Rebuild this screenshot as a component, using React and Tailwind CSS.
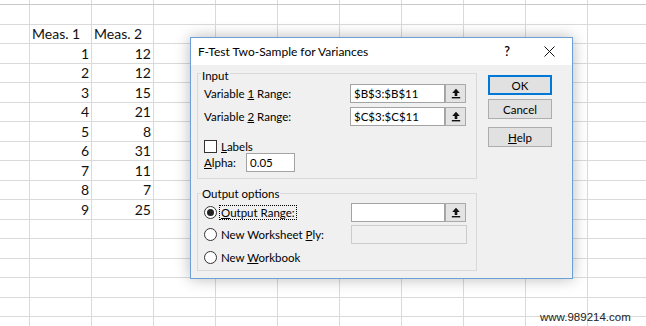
import React from 'react';

const meas = [
  [1, 12], [2, 12], [3, 15], [4, 21], [5, 8], [6, 31], [7, 11], [8, 7], [9, 25],
];

const rows = [
  ['', ''],
  ['Meas. 1', 'Meas. 2'],
  ...meas.map(([a, b]) => [a, b]),
  ['', ''], ['', ''], ['', ''], ['', ''], ['', ''], ['', ''],
];

const EXTRA_COLS = 9;

const Cell = ({ first, right, children }) => (
  <div
    className={`${first ? 'w-[30px]' : 'w-[62px]'} shrink-0 h-full border-r border-[#dadada] flex items-end pb-[1px] px-[2px] ${right ? 'justify-end' : ''}`}
  >
    {children}
  </div>
);

const UpArrow = () => (
  <svg width="10" height="11" viewBox="0 0 10 11">
    <path d="M5 0.8 L1.2 5 H3.7 V8 H6.3 V5 H8.8 Z" fill="#111" />
    <rect x="0.8" y="9" width="8.4" height="1.4" fill="#111" />
  </svg>
);

const RefButton = () => (
  <div className="w-[21px] h-full shrink-0 bg-[#e3e3e3] border border-[#a9a9a9] flex items-center justify-center">
    <UpArrow />
  </div>
);

const TextBox = ({ value, width }) => (
  <div className={`${width} h-full shrink-0 bg-white border border-[#a3a3a3] flex items-center px-[3px] text-[11.5px]`}>
    {value}
  </div>
);

const Radio = ({ checked }) => (
  <div className="w-[13px] h-[13px] shrink-0 rounded-full border border-[#333] bg-white flex items-center justify-center">
    {checked && <div className="w-[7px] h-[7px] rounded-full bg-[#222]" />}
  </div>
);

const Button = ({ children, primary }) => (
  <div
    className={`w-[64px] h-[20px] bg-[#e1e1e1] flex items-center justify-center ${primary ? 'border-2 border-[#0078d7]' : 'border border-[#adadad]'}`}
  >
    {children}
  </div>
);

export default function App() {
  return (
    <div className="relative w-[646px] h-[326px] overflow-hidden bg-white font-['Lato',sans-serif] text-[14px] leading-[16px] text-[#111]">
      {/* sheet grid */}
      <div className="flex flex-col">
        <div className="h-[5px] flex border-b border-[#c9c9c9]">
          <Cell first />
          {Array.from({ length: EXTRA_COLS + 2 }).map((_, i) => (
            <Cell key={i} />
          ))}
        </div>
        {rows.map((r, i) => {
          const isNum = typeof r[0] === 'number';
          return (
            <div key={i} className="h-[19.5px] shrink-0 flex border-b border-[#dadada]">
              <Cell first />
              <Cell right={isNum}>{r[0]}</Cell>
              <Cell right={isNum}>{r[1]}</Cell>
              {Array.from({ length: EXTRA_COLS }).map((_, j) => (
                <Cell key={j} />
              ))}
            </div>
          );
        })}
      </div>

      {/* dialog */}
      <div className="absolute left-[190px] top-[37px] w-[383px] h-[242px] border border-[#6b9fd8] bg-[#f0f0f0] shadow-[0_0_14px_rgba(0,0,0,0.28)] flex flex-col font-['Segoe_UI',Lato,sans-serif] text-[11.5px] leading-[15px] text-black">
        <div className="h-[27px] shrink-0 bg-white flex items-center pl-[7px]">
          <span className="flex-1 text-[12px]">F-Test Two-Sample for Variances</span>
          <span className="text-[12.5px] font-semibold mr-[34px]">?</span>
          <svg width="11" height="11" viewBox="0 0 11 11" className="mr-[17px]">
            <path d="M0.5 0.5 L10.5 10.5 M10.5 0.5 L0.5 10.5" stroke="#111" strokeWidth="1" />
          </svg>
        </div>

        <div className="flex flex-1 pl-[6px] pt-[8px]">
          <div className="w-[280px] flex flex-col">
            {/* Input */}
            <div className="h-[106px] border border-[#d9d9d9] flex flex-col">
              <span className="-mt-[6px] ml-[3px] px-[1px] w-fit bg-[#f0f0f0] h-[15px]">Input</span>
              <div className="mt-[1px] h-[19px] flex items-center pl-[6px]">
                <span className="w-[146px]">Variable <u>1</u> Range:</span>
                <TextBox value="$B$3:$B$11" width="w-[95px]" />
                <RefButton />
              </div>
              <div className="mt-[4px] h-[19px] flex items-center pl-[6px]">
                <span className="w-[146px]">Variable <u>2</u> Range:</span>
                <TextBox value="$C$3:$C$11" width="w-[95px]" />
                <RefButton />
              </div>
              <div className="mt-[14px] h-[13px] flex items-center pl-[6px] gap-[4px]">
                <div className="w-[13px] h-[13px] border border-[#333] bg-white" />
                <span><u>L</u>abels</span>
              </div>
              <div className="h-[19px] flex items-center pl-[6px]">
                <span className="w-[42px]"><u>A</u>lpha:</span>
                <TextBox value="0.05" width="w-[49px]" />
              </div>
            </div>

            {/* Output options */}
            <div className="mt-[14px] h-[78px] border border-[#d9d9d9] flex flex-col">
              <span className="-mt-[8px] ml-[3px] px-[1px] w-fit bg-[#f0f0f0] h-[15px]">Output options</span>
              <div className="mt-[2px] h-[19px] flex items-center pl-[6px]">
                <div className="w-[147px] flex items-center gap-[2px]">
                  <Radio checked />
                  <span className="border border-dotted border-black px-[1px] leading-[13px]"><u>O</u>utput Range:</span>
                </div>
                <TextBox value="" width="w-[94px]" />
                <RefButton />
              </div>
              <div className="mt-[3px] h-[19px] flex items-center pl-[6px]">
                <div className="w-[147px] flex items-center gap-[2px]">
                  <Radio />
                  <span className="border border-transparent px-[1px] leading-[13px]">New Worksheet <u>P</u>ly:</span>
                </div>
                <div className="w-[116px] h-full border border-[#cccccc] bg-[#f0f0f0]" />
              </div>
              <div className="mt-[4px] h-[19px] flex items-center pl-[6px] gap-[2px]">
                <Radio />
                <span className="border border-transparent px-[1px] leading-[13px]">New <u>W</u>orkbook</span>
              </div>
            </div>
          </div>

          <div className="ml-[11px] flex flex-col pt-[2px]">
            <Button primary>OK</Button>
            <div className="mt-[4px]">
              <Button>Cancel</Button>
            </div>
            <div className="mt-[8px]">
              <Button><span><u>H</u>elp</span></Button>
            </div>
          </div>
        </div>
      </div>

      <div className="absolute left-[540px] top-[310px] font-['Liberation_Sans',Arial,sans-serif] text-[11.5px] leading-[14px] text-[#222]">
        www.989214.com
      </div>
    </div>
  );
}
